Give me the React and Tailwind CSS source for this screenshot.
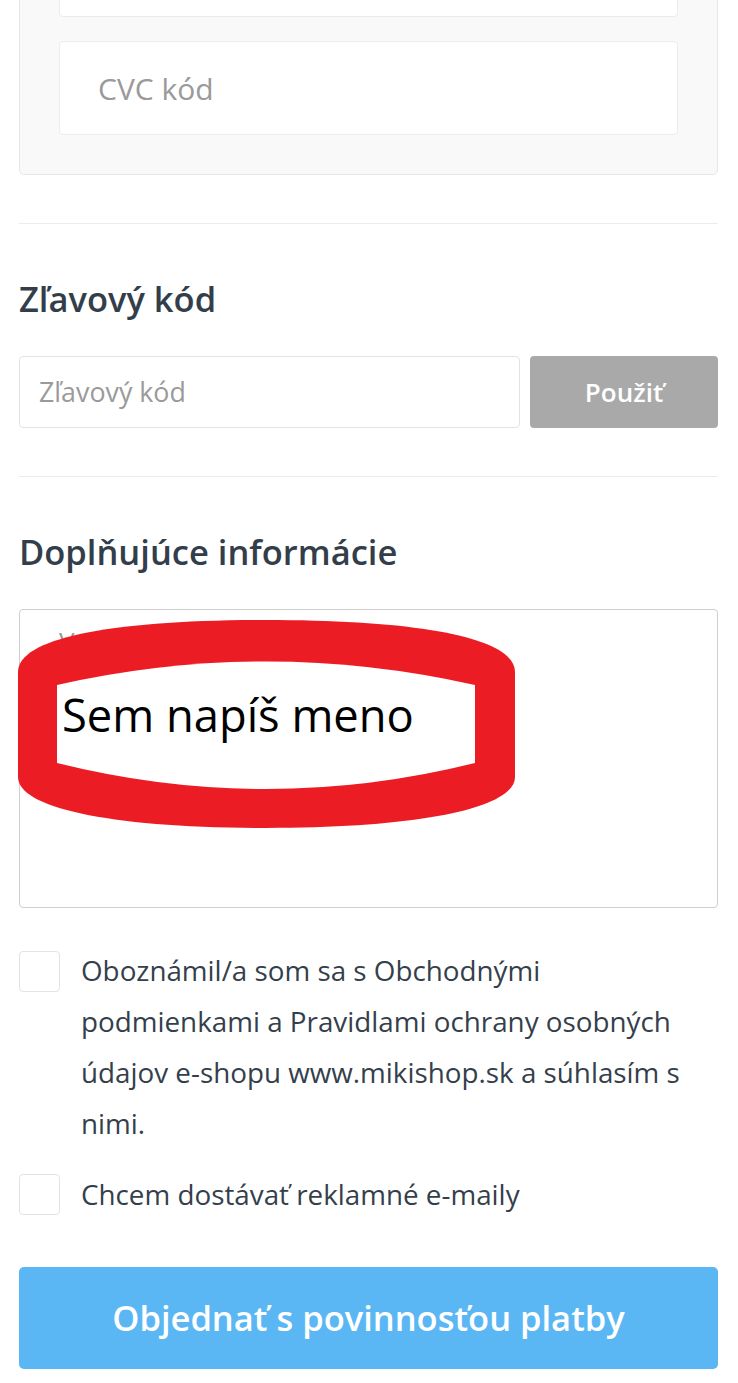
export default function App() {
  const font = { fontFamily: '"Open Sans", "Noto Sans", sans-serif' };
  return (
    <div className="min-h-[1383px] overflow-hidden bg-white pl-[19px] pr-[20px]" style={font}>
      {/* card */}
      <div className="mt-[-117px] rounded-[5px] border border-[#e6e6e6] bg-[#f9f9f9] px-[39px] py-[39px] flex flex-col gap-[24px]">
        <div className="h-[94px] rounded-[4px] border border-[#ececec] bg-white" />
        <div className="h-[94px] rounded-[4px] border border-[#ececec] bg-white flex items-center pl-[38px] text-[30px] text-[#9a9a9a]">
          CVC kód
        </div>
      </div>

      <div className="mt-[48px] h-px bg-[#ececec]" />

      <h2 className="mt-[56px] text-[34.5px] leading-[38px] font-semibold text-[#333e4b]">Zľavový kód</h2>

      <div className="mt-[38px] flex gap-[10px] h-[72px]">
        <div className="flex-1 rounded-[4px] border border-[#e3e3e3] bg-white flex items-center pl-[19px] text-[26.8px] text-[#9a9a9a]">
          Zľavový kód
        </div>
        <div className="w-[188px] rounded-[4px] bg-[#a9a9a9] flex items-center justify-center text-[26px] font-semibold text-white">
          Použiť
        </div>
      </div>

      <div className="mt-[48px] h-px bg-[#ececec]" />

      <h2 className="mt-[56px] text-[34.5px] leading-[38px] font-semibold text-[#333e4b]">Doplňujúce informácie</h2>

      <div className="relative mt-[38px] h-[299px] rounded-[4px] border border-[#cfcfcf] bg-white">
        <div className="pl-[39px] pt-[12px] text-[26px] text-[#9a9a9a]">Vaše poznámky</div>
        <svg className="absolute left-[-19px] top-[-610px]" width="738" height="1383" viewBox="0 0 738 1383">
          <path
            d="M17,672 C17,638 110,620 265,620 C420,620 514,638 514,672 L514,777 C514,808 420,828 265,828 C110,828 17,808 17,777 Z"
            fill="#ec1c24"
          />
          <path d="M56,685 Q265,638 474,685 L474,763 Q265,815 56,763 Z" fill="#ffffff" />
        </svg>
        <div className="absolute left-[42px] top-[77px] text-[45.3px] leading-[56px] text-black">Sem napíš meno</div>
      </div>

      <div className="mt-[37px] flex gap-[21px] pr-[25px]">
        <div className="mt-[6px] h-[41px] w-[41px] shrink-0 rounded-[4px] border border-[#e3e3e3] bg-white" />
        <p className="text-[27.8px] leading-[51px] font-medium text-[#353f4c]">
          Oboznámil/a som sa s Obchodnými podmienkami a Pravidlami ochrany osobných údajov e-shopu www.mikishop.sk a súhlasím s nimi.
        </p>
      </div>

      <div className="mt-[20px] flex items-center gap-[21px]">
        <div className="h-[41px] w-[41px] shrink-0 rounded-[4px] border border-[#e3e3e3] bg-white" />
        <p className="text-[27.8px] leading-[51px] font-medium text-[#353f4c]">Chcem dostávať reklamné e-maily</p>
      </div>

      <div className="mt-[47px] h-[102px] rounded-[5px] bg-[#5bb7f4] flex items-center justify-center text-[34.5px] font-semibold text-white">
        Objednať s povinnosťou platby
      </div>
    </div>
  );
}
